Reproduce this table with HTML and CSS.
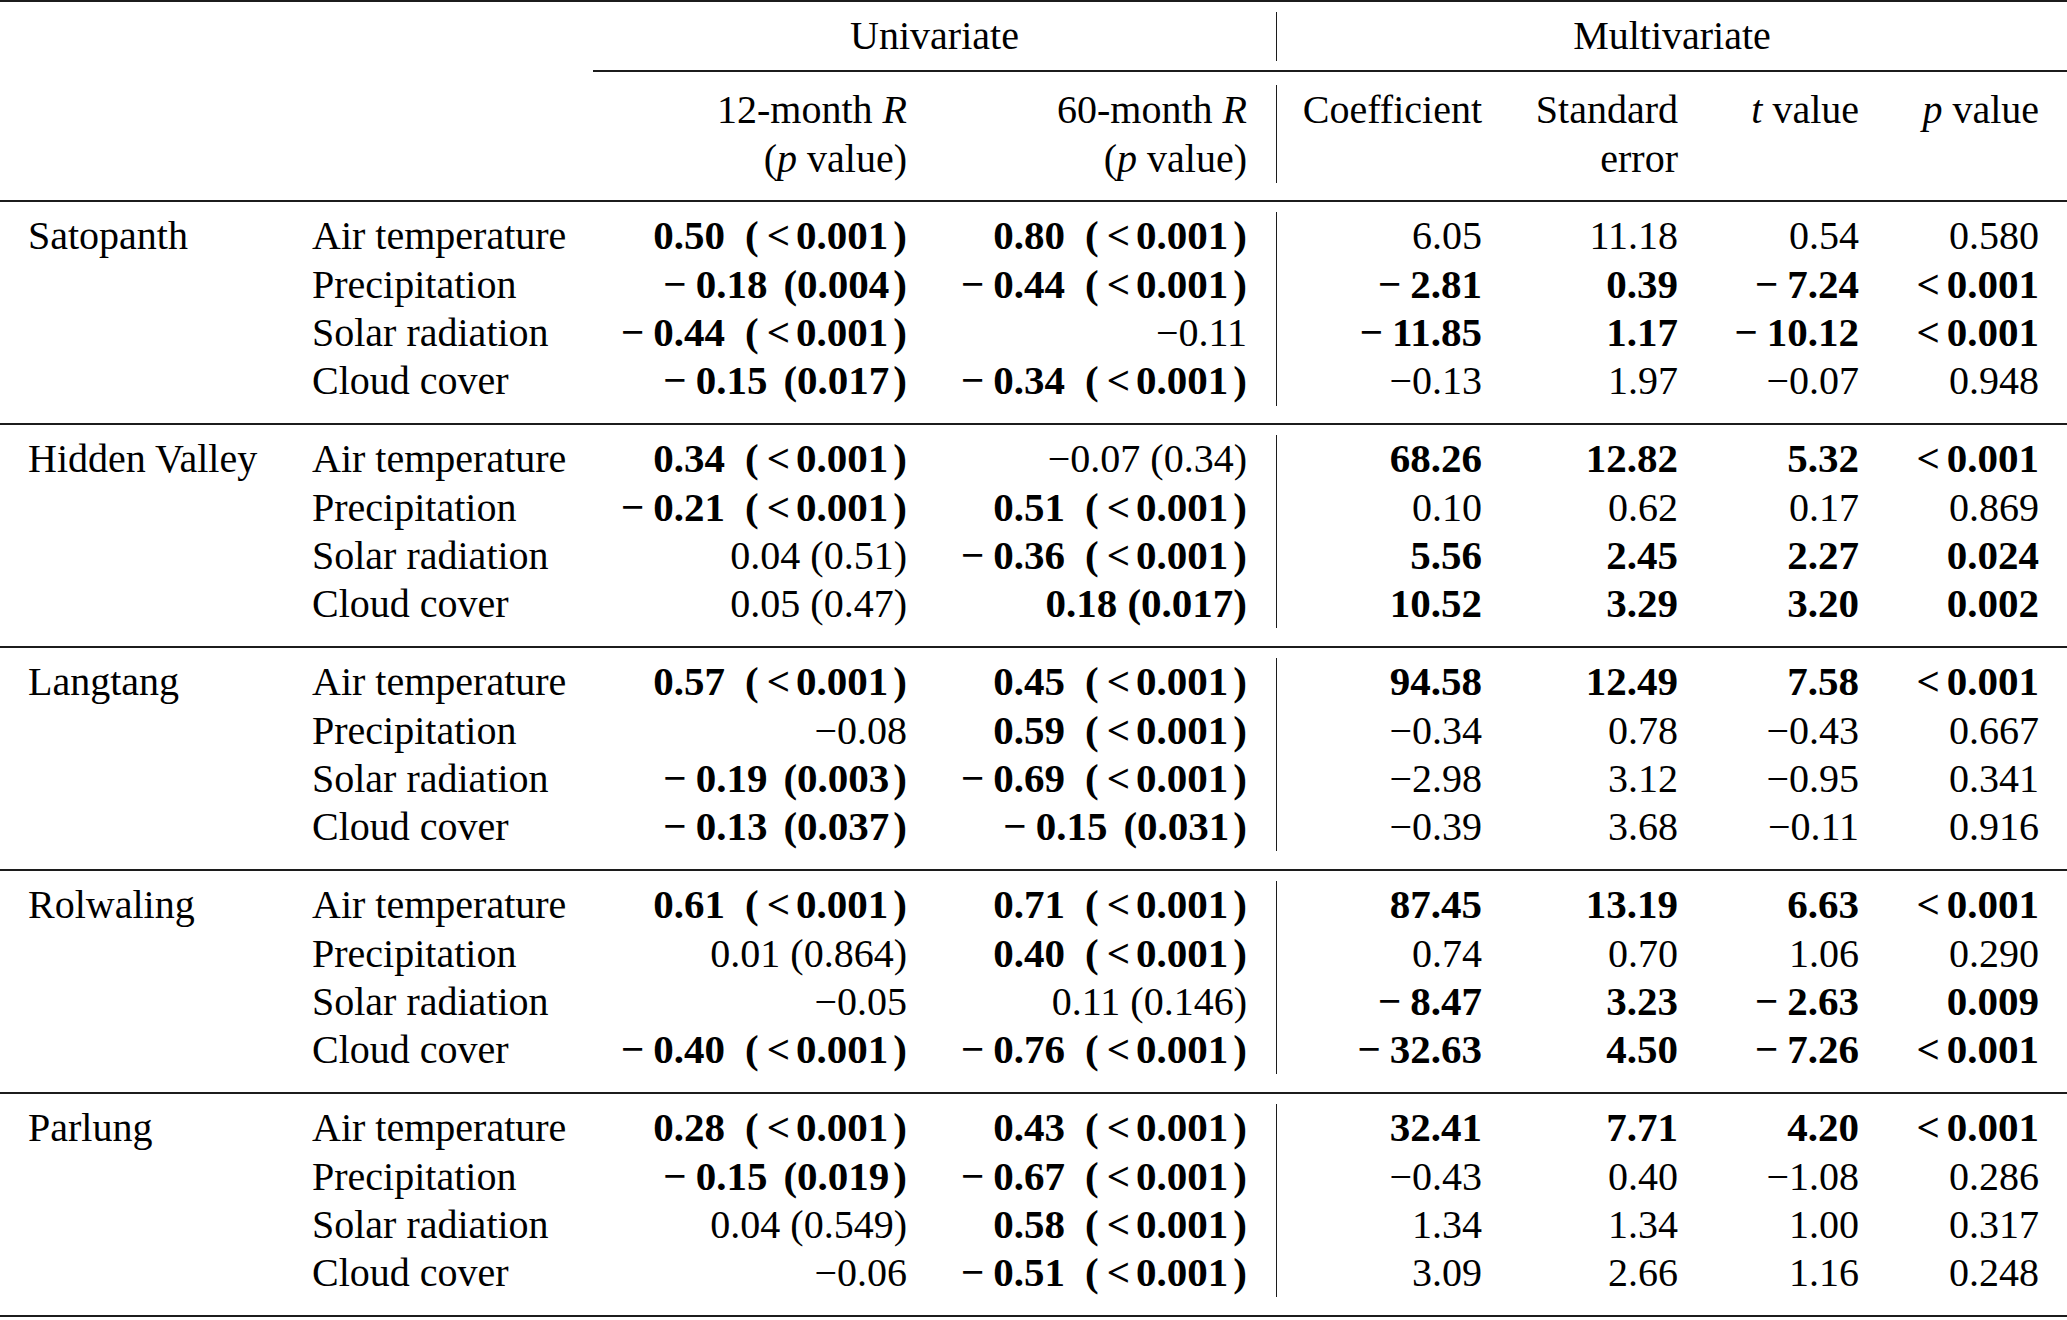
FILE: index.html
```html
<!DOCTYPE html>
<html lang="en">
<head>
<meta charset="utf-8">
<title>Correlation and regression table</title>
<link rel="stylesheet" href="styles.css">
</head>
<body>
<div class="tbl">
  <div class="h1">
    <div class="uv">Univariate</div>
    <div class="mv">Multivariate</div>
  </div>
  <div class="h2">
    <div class="c1"></div>
    <div class="c2"></div>
    <div class="c3">12-month <i>R</i><br>(<i>p</i> value)</div>
    <div class="c4">60-month <i>R</i><br>(<i>p</i> value)</div>
    <div class="c5">Coefficient</div>
    <div class="c6">Standard<br>error</div>
    <div class="c7"><i>t</i> value</div>
    <div class="c8"><i>p</i> value</div>
  </div>

  <div class="grp">
    <div class="c1 name">Satopanth</div>
    <div class="c2">Air temperature</div>
    <div class="c3"><b>0.50<span class="o">(</span><span class="r">&lt;</span>0.001<span class="c">)</span></b></div>
    <div class="c4"><b>0.80<span class="o">(</span><span class="r">&lt;</span>0.001<span class="c">)</span></b></div>
    <div class="c5">6.05</div>
    <div class="c6">11.18</div>
    <div class="c7">0.54</div>
    <div class="c8">0.580</div>

    <div class="c2">Precipitation</div>
    <div class="c3"><b><span class="n">−</span>0.18<span class="p">(</span>0.004<span class="d">)</span></b></div>
    <div class="c4"><b><span class="n">−</span>0.44<span class="o">(</span><span class="r">&lt;</span>0.001<span class="c">)</span></b></div>
    <div class="c5"><b><span class="n">−</span>2.81</b></div>
    <div class="c6"><b>0.39</b></div>
    <div class="c7"><b><span class="n">−</span>7.24</b></div>
    <div class="c8"><b><span class="q">&lt;</span>0.001</b></div>

    <div class="c2">Solar radiation</div>
    <div class="c3"><b><span class="n">−</span>0.44<span class="o">(</span><span class="r">&lt;</span>0.001<span class="c">)</span></b></div>
    <div class="c4">−0.11</div>
    <div class="c5"><b><span class="n">−</span>11.85</b></div>
    <div class="c6"><b>1.17</b></div>
    <div class="c7"><b><span class="n">−</span>10.12</b></div>
    <div class="c8"><b><span class="q">&lt;</span>0.001</b></div>

    <div class="c2">Cloud cover</div>
    <div class="c3"><b><span class="n">−</span>0.15<span class="p">(</span>0.017<span class="d">)</span></b></div>
    <div class="c4"><b><span class="n">−</span>0.34<span class="o">(</span><span class="r">&lt;</span>0.001<span class="c">)</span></b></div>
    <div class="c5">−0.13</div>
    <div class="c6">1.97</div>
    <div class="c7">−0.07</div>
    <div class="c8">0.948</div>
  </div>

  <div class="grp">
    <div class="c1 name">Hidden Valley</div>
    <div class="c2">Air temperature</div>
    <div class="c3"><b>0.34<span class="o">(</span><span class="r">&lt;</span>0.001<span class="c">)</span></b></div>
    <div class="c4">−0.07 (0.34)</div>
    <div class="c5"><b>68.26</b></div>
    <div class="c6"><b>12.82</b></div>
    <div class="c7"><b>5.32</b></div>
    <div class="c8"><b><span class="q">&lt;</span>0.001</b></div>

    <div class="c2">Precipitation</div>
    <div class="c3"><b><span class="n">−</span>0.21<span class="o">(</span><span class="r">&lt;</span>0.001<span class="c">)</span></b></div>
    <div class="c4"><b>0.51<span class="o">(</span><span class="r">&lt;</span>0.001<span class="c">)</span></b></div>
    <div class="c5">0.10</div>
    <div class="c6">0.62</div>
    <div class="c7">0.17</div>
    <div class="c8">0.869</div>

    <div class="c2">Solar radiation</div>
    <div class="c3">0.04 (0.51)</div>
    <div class="c4"><b><span class="n">−</span>0.36<span class="o">(</span><span class="r">&lt;</span>0.001<span class="c">)</span></b></div>
    <div class="c5"><b>5.56</b></div>
    <div class="c6"><b>2.45</b></div>
    <div class="c7"><b>2.27</b></div>
    <div class="c8"><b>0.024</b></div>

    <div class="c2">Cloud cover</div>
    <div class="c3">0.05 (0.47)</div>
    <div class="c4"><b>0.18 (0.017)</b></div>
    <div class="c5"><b>10.52</b></div>
    <div class="c6"><b>3.29</b></div>
    <div class="c7"><b>3.20</b></div>
    <div class="c8"><b>0.002</b></div>
  </div>

  <div class="grp">
    <div class="c1 name">Langtang</div>
    <div class="c2">Air temperature</div>
    <div class="c3"><b>0.57<span class="o">(</span><span class="r">&lt;</span>0.001<span class="c">)</span></b></div>
    <div class="c4"><b>0.45<span class="o">(</span><span class="r">&lt;</span>0.001<span class="c">)</span></b></div>
    <div class="c5"><b>94.58</b></div>
    <div class="c6"><b>12.49</b></div>
    <div class="c7"><b>7.58</b></div>
    <div class="c8"><b><span class="q">&lt;</span>0.001</b></div>

    <div class="c2">Precipitation</div>
    <div class="c3">−0.08</div>
    <div class="c4"><b>0.59<span class="o">(</span><span class="r">&lt;</span>0.001<span class="c">)</span></b></div>
    <div class="c5">−0.34</div>
    <div class="c6">0.78</div>
    <div class="c7">−0.43</div>
    <div class="c8">0.667</div>

    <div class="c2">Solar radiation</div>
    <div class="c3"><b><span class="n">−</span>0.19<span class="p">(</span>0.003<span class="d">)</span></b></div>
    <div class="c4"><b><span class="n">−</span>0.69<span class="o">(</span><span class="r">&lt;</span>0.001<span class="c">)</span></b></div>
    <div class="c5">−2.98</div>
    <div class="c6">3.12</div>
    <div class="c7">−0.95</div>
    <div class="c8">0.341</div>

    <div class="c2">Cloud cover</div>
    <div class="c3"><b><span class="n">−</span>0.13<span class="p">(</span>0.037<span class="d">)</span></b></div>
    <div class="c4"><b><span class="n">−</span>0.15<span class="p">(</span>0.031<span class="d">)</span></b></div>
    <div class="c5">−0.39</div>
    <div class="c6">3.68</div>
    <div class="c7">−0.11</div>
    <div class="c8">0.916</div>
  </div>

  <div class="grp">
    <div class="c1 name">Rolwaling</div>
    <div class="c2">Air temperature</div>
    <div class="c3"><b>0.61<span class="o">(</span><span class="r">&lt;</span>0.001<span class="c">)</span></b></div>
    <div class="c4"><b>0.71<span class="o">(</span><span class="r">&lt;</span>0.001<span class="c">)</span></b></div>
    <div class="c5"><b>87.45</b></div>
    <div class="c6"><b>13.19</b></div>
    <div class="c7"><b>6.63</b></div>
    <div class="c8"><b><span class="q">&lt;</span>0.001</b></div>

    <div class="c2">Precipitation</div>
    <div class="c3">0.01 (0.864)</div>
    <div class="c4"><b>0.40<span class="o">(</span><span class="r">&lt;</span>0.001<span class="c">)</span></b></div>
    <div class="c5">0.74</div>
    <div class="c6">0.70</div>
    <div class="c7">1.06</div>
    <div class="c8">0.290</div>

    <div class="c2">Solar radiation</div>
    <div class="c3">−0.05</div>
    <div class="c4">0.11 (0.146)</div>
    <div class="c5"><b><span class="n">−</span>8.47</b></div>
    <div class="c6"><b>3.23</b></div>
    <div class="c7"><b><span class="n">−</span>2.63</b></div>
    <div class="c8"><b>0.009</b></div>

    <div class="c2">Cloud cover</div>
    <div class="c3"><b><span class="n">−</span>0.40<span class="o">(</span><span class="r">&lt;</span>0.001<span class="c">)</span></b></div>
    <div class="c4"><b><span class="n">−</span>0.76<span class="o">(</span><span class="r">&lt;</span>0.001<span class="c">)</span></b></div>
    <div class="c5"><b><span class="n">−</span>32.63</b></div>
    <div class="c6"><b>4.50</b></div>
    <div class="c7"><b><span class="n">−</span>7.26</b></div>
    <div class="c8"><b><span class="q">&lt;</span>0.001</b></div>
  </div>

  <div class="grp">
    <div class="c1 name">Parlung</div>
    <div class="c2">Air temperature</div>
    <div class="c3"><b>0.28<span class="o">(</span><span class="r">&lt;</span>0.001<span class="c">)</span></b></div>
    <div class="c4"><b>0.43<span class="o">(</span><span class="r">&lt;</span>0.001<span class="c">)</span></b></div>
    <div class="c5"><b>32.41</b></div>
    <div class="c6"><b>7.71</b></div>
    <div class="c7"><b>4.20</b></div>
    <div class="c8"><b><span class="q">&lt;</span>0.001</b></div>

    <div class="c2">Precipitation</div>
    <div class="c3"><b><span class="n">−</span>0.15<span class="p">(</span>0.019<span class="d">)</span></b></div>
    <div class="c4"><b><span class="n">−</span>0.67<span class="o">(</span><span class="r">&lt;</span>0.001<span class="c">)</span></b></div>
    <div class="c5">−0.43</div>
    <div class="c6">0.40</div>
    <div class="c7">−1.08</div>
    <div class="c8">0.286</div>

    <div class="c2">Solar radiation</div>
    <div class="c3">0.04 (0.549)</div>
    <div class="c4"><b>0.58<span class="o">(</span><span class="r">&lt;</span>0.001<span class="c">)</span></b></div>
    <div class="c5">1.34</div>
    <div class="c6">1.34</div>
    <div class="c7">1.00</div>
    <div class="c8">0.317</div>

    <div class="c2">Cloud cover</div>
    <div class="c3">−0.06</div>
    <div class="c4"><b><span class="n">−</span>0.51<span class="o">(</span><span class="r">&lt;</span>0.001<span class="c">)</span></b></div>
    <div class="c5">3.09</div>
    <div class="c6">2.66</div>
    <div class="c7">1.16</div>
    <div class="c8">0.248</div>
  </div>
</div>
</body>
</html>
```

FILE: styles.css
```css
html, body {
  margin: 0;
  padding: 0;
  background: #ffffff;
}

.tbl {
  width: 2067px;
  font-family: "Liberation Serif", "Times New Roman", "DejaVu Serif", serif;
  font-size: 40px;
  color: #000000;
  border-top: 2px solid #1c1c1c;
  border-bottom: 2px solid #1c1c1c;
  white-space: nowrap;
}

.h1 {
  margin-left: 593px;
  display: grid;
  grid-template-columns: 683px 791px;
  padding: 10.35px 0 9.35px;
  border-bottom: 2px solid #1c1c1c;
  line-height: 48.3px;
  text-align: center;
}

.h1 .mv {
  border-left: 1.5px solid #1c1c1c;
}

.h2,
.grp {
  display: grid;
  grid-template-columns: 312px 281px 327px 356px 219px 196px 181px 195px;
}

.h2 {
  padding: 13px 0 17px;
  line-height: 49px;
}

.grp {
  padding: 10.35px 0 17.45px;
  border-top: 2px solid #1c1c1c;
  line-height: 48.3px;
  grid-auto-rows: 48.3px;
}

.c1 {
  padding-left: 28px;
}

.grp .name {
  grid-row: span 4;
}

.c3,
.c4,
.c5,
.c6,
.c7,
.c8 {
  text-align: right;
}

.c3 { padding-right: 13px; }
.c4 { padding-right: 29px; }
.c5 { padding-right: 13px; border-left: 1.5px solid #1c1c1c; }
.c6 { padding-right: 13px; }
.c7 { padding-right: 13px; }
.c8 { padding-right: 28px; }

b {
  font-weight: bold;
  font-size: 41px;
  line-height: 1;
}

i {
  font-style: italic;
}

/* spacing inside bold math-style entries */
.n { margin-right: 9px; }
.o { margin-left: 20px; }
.r { margin: 0 6px 0 8px; }
.c { margin-left: 5px; }
.p { margin-left: 16px; }
.d { margin-left: 4px; }
.q { margin-right: 7px; }
```
